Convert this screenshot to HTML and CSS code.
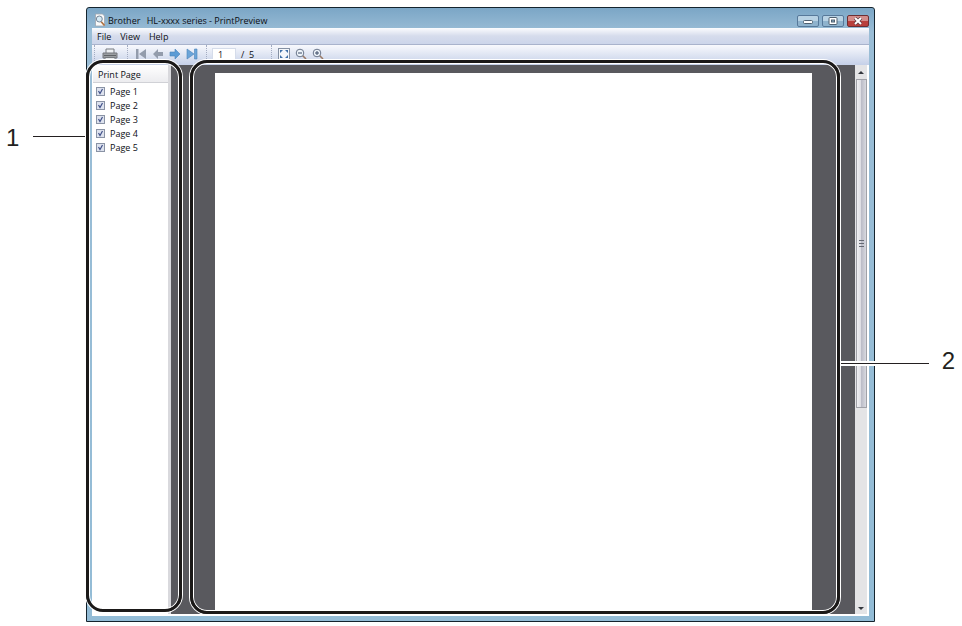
FILE: index.html
```html
<!DOCTYPE html>
<html lang="en">

<head>
    <meta charset="UTF-8">
    <meta name="viewport" content="width=device-width, initial-scale=1.0">
    <title>Brother HL-xxxx series - PrintPreview</title>
    <link rel="stylesheet" href="styles.css">
</head>

<body>

    <main class="figure">
        <div class="window">
            <header class="title-bar">
                <svg class="app-icon" viewBox="0 0 12 14" width="12" height="14">
                    <path d="M1.5 1h7l2 2v10h-9z" fill="#fafafa" stroke="#a0a6ae" stroke-width=".8" />
                    <path d="M7 8.5l3.5 4" stroke="#b0713f" stroke-width="1.6" />
                    <circle cx="5.3" cy="6" r="3" fill="#d5eaf5" stroke="#77889a" stroke-width="1" />
                </svg>
                <h1><span>Brother</span> <span class="model">HL-xxxx series - PrintPreview</span></h1>
                <div class="window-buttons">
                    <button type="button" aria-label="Minimize">
                        <svg viewBox="0 0 10 8" width="10" height="8"><rect x=".5" y="3.5" width="9" height="3" rx="1" fill="#fff" stroke="#4f6070" /></svg>
                    </button>
                    <button type="button" aria-label="Maximize">
                        <svg viewBox="0 0 10 8" width="10" height="8"><rect x="1" y=".5" width="8" height="7" rx="1" fill="#fff" stroke="#4f6070" /><rect x="3.5" y="3" width="3" height="2" fill="#8fb0c8" stroke="#4f6070" /></svg>
                    </button>
                    <button type="button" class="close" aria-label="Close">
                        <svg viewBox="0 0 10 8" width="10" height="8"><path d="M2 1l6 6M8 1L2 7" stroke="#5b3a40" stroke-width="3.4" /><path d="M2 1l6 6M8 1L2 7" stroke="#fff" stroke-width="2" /></svg>
                    </button>
                </div>
            </header>

            <nav class="menu-bar">
                <button type="button">File</button>
                <button type="button">View</button>
                <button type="button">Help</button>
            </nav>

            <div class="toolbar">
                <div class="tool-group print-group">
                    <button type="button" aria-label="Print">
                        <svg viewBox="0 0 16 13" width="16" height="13">
                            <path d="M4 5V1h8v4" fill="#eef0f3" stroke="#777b80" />
                            <path d="M1 5h14v5H1z" fill="#9b9ea2" stroke="#74777c" />
                            <path d="M2 7.5h12" stroke="#606367" />
                            <path d="M3 9.5h10v2.5H3z" fill="#e6e8ea" stroke="#777b80" />
                        </svg>
                    </button>
                </div>
                <div class="tool-group move-group">
                    <button type="button" aria-label="First page">
                        <svg viewBox="0 0 12 12" width="12" height="12"><path d="M1 1h2.500v10H1zM11 1v10L4 6z" fill="#939cac" /></svg>
                    </button>
                    <button type="button" aria-label="Previous page">
                        <svg viewBox="0 0 12 12" width="12" height="12"><path d="M1 6l5-5v3h5v4H6v3z" fill="#939cac" /></svg>
                    </button>
                    <button type="button" aria-label="Next page">
                        <svg viewBox="0 0 12 12" width="12" height="12"><path d="M11 6L6 1v3H1v4h5v3z" fill="#5b9bd5" stroke="#4a83ba" stroke-width=".6" /></svg>
                    </button>
                    <button type="button" aria-label="Last page">
                        <svg viewBox="0 0 12 12" width="12" height="12"><path d="M8.500 1H11v10H8.500zM1 1v10L8 6z" fill="#6ba5d9" stroke="#4a83ba" stroke-width=".6" /></svg>
                    </button>
                </div>
                <div class="tool-group page-group">
                    <input type="text" id="page-number" value="1" aria-label="Page number">
                    <label for="page-number">/&nbsp; 5</label>
                </div>
                <div class="tool-group zoom-group">
                    <button type="button" aria-label="Fit to window">
                        <svg viewBox="0 0 12 12" width="12" height="12">
                            <rect x=".5" y=".5" width="11" height="11" fill="#f4f7fb" stroke="#8490a3" />
                            <path d="M2 2h3L2 5zM10 2H7l3 3zM2 10h3L2 7zM10 10H7l3-3z" fill="#3f70a8" />
                        </svg>
                    </button>
                    <button type="button" aria-label="Zoom out">
                        <svg viewBox="0 0 12 12" width="12" height="12"><path d="M7.500 7.500l3.500 3.500" stroke="#9a7a66" stroke-width="1.600" /><circle cx="5" cy="5" r="3.800" fill="#eef4fa" stroke="#69758a" /><path d="M3 5h4" stroke="#3b4a66" /></svg>
                    </button>
                    <button type="button" aria-label="Zoom in">
                        <svg viewBox="0 0 12 12" width="12" height="12"><path d="M7.500 7.500l3.500 3.500" stroke="#9a7a66" stroke-width="1.600" /><circle cx="5" cy="5" r="3.800" fill="#eef4fa" stroke="#69758a" /><path d="M3 5h4M5 3v4" stroke="#3b4a66" /></svg>
                    </button>
                </div>
            </div>

            <div class="workspace">
                <aside class="page-list">
                    <h2>Print Page</h2>
                    <label><input type="checkbox" checked> Page 1</label>
                    <label><input type="checkbox" checked> Page 2</label>
                    <label><input type="checkbox" checked> Page 3</label>
                    <label><input type="checkbox" checked> Page 4</label>
                    <label><input type="checkbox" checked> Page 5</label>
                </aside>
                <section class="preview">
                    <div class="paper"></div>
                </section>
                <div class="scrollbar">
                    <span class="arrow up"></span>
                    <span class="thumb"></span>
                    <span class="arrow down"></span>
                </div>

                <!-- Callout frames and their leader lines -->
                <div class="leader leader-one"></div>
                <div class="leader leader-two"></div>
                <div class="frame frame-list"></div>
                <div class="frame frame-preview"></div>
                <span class="number number-one">1</span>
                <span class="number number-two">2</span>
            </div>
        </div>
    </main>

</body>

</html>
```
FILE: styles.css
```css
* {
    box-sizing: border-box;
}

body {
    margin: 0;
    background: #ffffff;
    font-family: "Open Sans", "Noto Sans", sans-serif;
    font-size: 9px;
    color: #0c0e14;
}

button {
    display: flex;
    align-items: center;
    justify-content: center;
    padding: 0;
    border: none;
    background: none;
    font: inherit;
    color: inherit;
}

svg {
    display: block;
    fill: none;
}

.figure {
    display: flex;
    min-height: 100vh;
    padding: 7px 87px 4px 86px;
}

/* Window */
.window {
    display: flex;
    flex: 1;
    flex-direction: column;
    padding: 0 5px 5px;
    border: 1px solid #14242e;
    border-radius: 3px 3px 0 0;
    background: linear-gradient(#7ba6c6, #9abdd6 24px, #93bcd6);
}

.title-bar {
    display: flex;
    align-items: center;
    height: 20px;
    padding-left: 2px;
}

.title-bar h1 {
    flex: 1;
    margin: 5px 0 0 2px;
    font-size: 9px;
    font-weight: 400;
    line-height: 12px;
}

.app-icon {
    margin-top: 3px;
}

.model {
    margin-left: 4px;
}

.window-buttons {
    display: flex;
    gap: 3px;
    margin-top: 5px;
}

.window-buttons button {
    width: 22px;
    height: 12px;
    border: 1px solid #57799a;
    border-radius: 2px;
    background: linear-gradient(#b8d2e4 50%, #8fb3cd 50%);
}

.window-buttons .close {
    border-color: #6d2f33;
    background: linear-gradient(#d38c8a 50%, #b8403c 50%);
}

/* Menu and toolbar */
.menu-bar {
    display: flex;
    gap: 9px;
    height: 17px;
    padding: 0 5px;
    border-bottom: 1px solid #a9b3cc;
    background: linear-gradient(#fbfcfe, #d6dcec 50%, #ccd5ea);
}

.toolbar {
    display: flex;
    height: 20px;
    padding-bottom: 2px;
    background: linear-gradient(#f8f9fd, #c5d0e8);
}

.tool-group {
    display: flex;
    align-items: center;
    gap: 5px;
    margin-left: 2px;
    padding-left: 7px;
    border-left: 1px dotted #a3acc2;
}

.print-group {
    width: 31px;
}

.move-group {
    width: 77px;
}

.page-group {
    width: 63px;
    padding-left: 5px;
}

.page-group input {
    width: 24px;
    height: 13px;
    padding: 0 5px;
    border: 1px solid #d5dcea;
    background: #ffffff;
    font: inherit;
    color: inherit;
}

.zoom-group {
    padding-left: 6px;
}

/* Workspace */
.workspace {
    position: relative;
    display: flex;
    flex: 1;
    border: solid #ffffff;
    border-width: 0 2px 2px 1px;
    background: #59595e;
}

.page-list {
    width: 78px;
    border-right: 3px solid #d9d9dd;
    background: #ffffff;
}

.page-list h2 {
    margin: 0 0 1px;
    padding: 4px 5px 1px;
    border-bottom: 1px solid #d0d1d6;
    background: linear-gradient(#ffffff, #ececef);
    font-size: 9px;
    font-weight: 400;
    line-height: 12px;
}

.page-list label {
    display: flex;
    align-items: center;
    gap: 5px;
    height: 14px;
    padding-left: 3px;
}

.page-list input {
    width: 9px;
    height: 9px;
    margin: 0;
    appearance: none;
    border: 1px solid #8a93a5;
    background: #dde2ee url("data:image/svg+xml,%3Csvg xmlns='http://www.w3.org/2000/svg' viewBox='0 0 7 7'%3E%3Cpath d='M1.500 3l1.500 2.500L5.500 1' fill='none' stroke='%23405088' stroke-width='1.200'/%3E%3C/svg%3E");
}

.preview {
    display: flex;
    flex: 1;
    padding: 8px 43px 3px 44px;
}

.paper {
    flex: 1;
    background: #ffffff;
}

.scrollbar {
    display: flex;
    flex-direction: column;
    align-items: center;
    width: 12px;
    background: #e4e4e6;
}

.arrow {
    width: 0;
    height: 0;
    border: 3px solid transparent;
}

.arrow.up {
    margin: 3px 0 5px;
    border-bottom-color: #33363d;
}

.arrow.down {
    margin: auto 0 1px;
    border-top-color: #33363d;
}

.thumb {
    display: flex;
    align-items: center;
    justify-content: center;
    width: 11px;
    height: 60%;
    border: 1px solid #a0a1a8;
    background: linear-gradient(90deg, #f0f0f3, #dcdce2 45%, #bcbdc8 50%, #d8d9df);
}

.thumb::before {
    width: 5px;
    height: 7px;
    background: repeating-linear-gradient(#666a74 0 1px, transparent 1px 3px);
    content: "";
}

/* Callouts */
.frame {
    position: absolute;
    border: 3px solid #1b1918;
    border-radius: 17px;
    box-shadow: 0 0 0 1px #ffffff, inset 0 0 0 1px #ffffff;
}

.frame-list {
    top: -5px;
    bottom: 2px;
    left: -7px;
    width: 96px;
}

.frame-preview {
    top: -5px;
    right: 27px;
    bottom: 0;
    left: 97px;
}

.leader {
    position: absolute;
    height: 1px;
    background: #231f20;
}

.leader-one {
    top: 71px;
    left: -60px;
    width: 54px;
}

.leader-two {
    top: 298px;
    right: -62px;
    width: 89px;
    box-shadow: 0 0 0 2px #ffffff;
}

.number {
    position: absolute;
    font-family: "Liberation Sans", Arial, sans-serif;
    font-size: 24px;
    line-height: 24px;
    color: #231f20;
}

.number-one {
    top: 61px;
    left: -87px;
}

.number-two {
    top: 284px;
    right: -88px;
}
```
